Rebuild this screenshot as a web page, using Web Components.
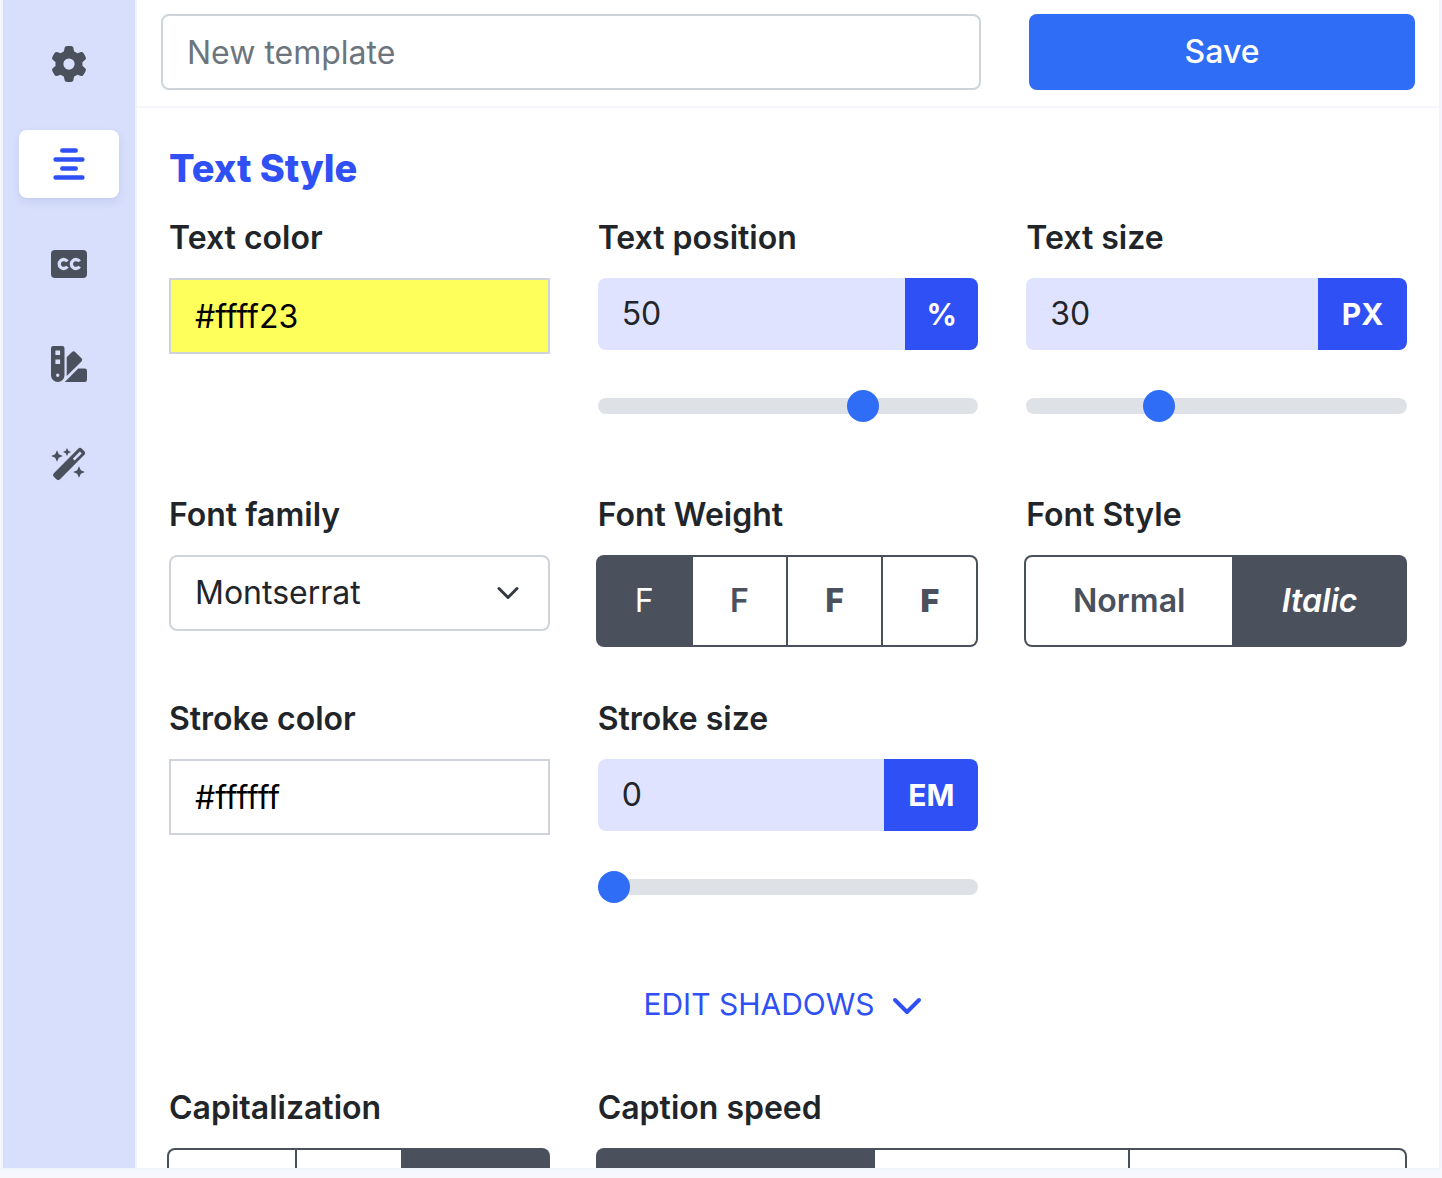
<!DOCTYPE html>
<html lang="en">
<head>
<meta charset="utf-8">
<title>Template editor</title>
<style>
  :root {
    --blue: #2e50f5;
    --primary: #306df6;
    --ink: #212529;
    --slate: #4a505c;
    --line: #ced4da;
    --frame: #f0f4fb;
  }
  body {
    margin: 0;
    background: #f6f8fd;
    color: var(--ink);
    font: 400 32px/40px Inter, "Liberation Sans", sans-serif;
  }
</style>
</head>
<body>
<template-editor></template-editor>
<script>
const base = `<style>
  *, *::before, *::after { box-sizing: border-box; }
  input, select, button { font: inherit; margin: 0; }
  label, .label { display: block; font-weight: 600; line-height: 40px; margin: 0 0 20px; }
</style>`;

class Base extends HTMLElement {
  connectedCallback() {
    if (this.shadowRoot) return;
    this.attachShadow({ mode: "open" }).innerHTML = base + this.render();
  }
  attr(name, fallback = "") { return this.getAttribute(name) ?? fallback; }
}

const icons = {
  gear: `<path transform="scale(.0703125)" d="M495.9 166.6c3.2 8.7 .5 18.4-6.4 24.6l-43.3 39.4c1.1 8.3 1.7 16.8 1.7 25.4s-.6 17.1-1.7 25.4l43.3 39.4c6.9 6.2 9.6 15.9 6.4 24.6c-4.4 11.9-9.7 23.3-15.8 34.3l-4.7 8.1c-6.6 11-14 21.4-22.1 31.2c-5.9 7.2-15.7 9.6-24.5 6.8l-55.7-17.7c-13.4 10.3-28.2 18.9-44 25.4l-12.5 57.1c-2 9.1-9 16.3-18.2 17.8c-13.8 2.3-28 3.5-42.5 3.5s-28.7-1.2-42.5-3.5c-9.2-1.5-16.2-8.7-18.2-17.8l-12.5-57.1c-15.8-6.5-30.6-15.1-44-25.4L83.1 425.9c-8.8 2.8-18.6 .3-24.5-6.8c-8.1-9.8-15.5-20.2-22.1-31.2l-4.7-8.1c-6.1-11-11.4-22.4-15.8-34.3c-3.2-8.7-.5-18.4 6.4-24.6l43.3-39.4C64.6 273.1 64 264.6 64 256s.6-17.1 1.7-25.4L22.4 191.2c-6.9-6.2-9.6-15.9-6.4-24.6c4.4-11.9 9.7-23.3 15.8-34.3l4.7-8.1c6.6-11 14-21.4 22.1-31.2c5.9-7.2 15.7-9.6 24.5-6.8l55.7 17.7c13.4-10.3 28.2-18.9 44-25.4l12.5-57.1c2-9.1 9-16.3 18.2-17.8C227.3 1.2 241.5 0 256 0s28.7 1.2 42.5 3.5c9.2 1.5 16.2 8.7 18.2 17.8l12.5 57.1c15.8 6.5 30.6 15.1 44 25.4l55.7-17.7c8.8-2.8 18.6-.3 24.5 6.8c8.1 9.8 15.5 20.2 22.1 31.2l4.7 8.1c6.1 11 11.4 22.4 15.8 34.3zM256 336a80 80 0 1 0 0-160 80 80 0 1 0 0 160z"/>`,
  align: `<path fill="none" stroke="currentColor" stroke-width="4.5" stroke-linecap="round" d="M11.3 4.4h13.4M4.6 13.4h26.8M11.3 22.4h13.4M4.6 31.4h26.8"/>`,
  captions: `<rect y="4" width="36" height="28" rx="4"/><path fill="none" stroke="#d8dffc" stroke-width="3.3" d="M16.4 15.4a4.5 4.5 0 1 0 0 5.2M28.6 15.4a4.5 4.5 0 1 0 0 5.2"/>`,
  swatches: `<path fill-rule="evenodd" d="M2.2 0h9.1a2.2 2.2 0 0 1 2.2 2.2v27a6.75 6.75 0 0 1-13.5 0v-27A2.2 2.2 0 0 1 2.2 0zM4.4 4.4V9h4.7V4.4zM4.4 13.4V18h4.7v-4.6zM6.75 27.6a1.7 1.7 0 1 0 0 3.4 1.7 1.7 0 0 0 0-3.4z"/><path d="M15.7 30V11.2L21 5.9a2.2 2.2 0 0 1 3.1 0l6.4 6.4a2.2 2.2 0 0 1 0 3.1zM13.8 36l13.4-13.5h6.6a2.2 2.2 0 0 1 2.2 2.2v9.1a2.2 2.2 0 0 1-2.2 2.2z"/>`,
  wand: `<path fill-rule="evenodd" d="M26.9 2.9a3 3 0 0 1 4.2 0l2 2a3 3 0 0 1 0 4.2L9.3 33.1a3 3 0 0 1-4.2 0l-2-2a3 3 0 0 1 0-4.2zM28.9 5.6l-7.1 7.1 1.8 1.8 7.1-7.1z"/><path d="M6 4.2 7.8 8.2 11.8 10 7.8 11.8 6 15.8 4.2 11.8.2 10 4.2 8.2zM16 2 17.3 4.7 20 6 17.3 7.3 16 10 14.7 7.3 12 6 14.7 4.7zM28 20.2l1.8 4 4 1.8-4 1.8-1.8 4-1.8-4-4-1.8 4-1.8z"/>`
};

customElements.define("side-tab", class extends Base {
  render() {
    return `<style>
      :host { display: block; }
      button { display: grid; place-items: center; width: 100%; height: 68px; padding: 0; border: 0; border-radius: 8px; background: none; color: var(--slate); }
      :host([selected]) button { background: #fff; color: var(--blue); box-shadow: 0 4px 8px rgb(60 80 160 / .12); }
      svg { width: 36px; height: 36px; fill: currentColor; }
    </style>
    <button type="button" aria-label="${this.attr("name")}"><svg viewBox="0 0 36 36" aria-hidden="true">${icons[this.attr("icon")]}</svg></button>`;
  }
});

customElements.define("side-bar", class extends Base {
  render() {
    return `<style>
      :host { display: block; flex: none; width: 134px; box-sizing: border-box; background: #d8dffc; border-right: 2px solid var(--frame); }
      nav { display: flex; flex-direction: column; gap: 32px; padding: 30px 16px; }
    </style><nav aria-label="Sections"><slot></slot></nav>`;
  }
});

customElements.define("template-header", class extends Base {
  render() {
    return `<style>
      :host { display: block; border-bottom: 2px solid #f4f6fc; }
      form { display: grid; grid-template-columns: repeat(3, minmax(0, 1fr)); column-gap: 48px; padding: 14px 24px 16px; }
      input { grid-column: span 2; width: 100%; height: 76px; padding: 0 24px; border: 2px solid var(--line); border-radius: 8px; background: #fff; color: var(--ink); }
      input::placeholder { color: #6c757d; opacity: 1; }
      button { height: 76px; padding: 0; border: 0; border-radius: 8px; background: var(--primary); color: #fff; font-weight: 500; }
    </style>
    <form><input type="text" aria-label="Template name" placeholder="New template"><button type="button">Save</button></form>`;
  }
});

customElements.define("color-field", class extends Base {
  render() {
    return `<style>
      :host { display: block; }
      input { display: block; width: 100%; height: 76px; padding: 0 24px; border: 2px solid var(--line); border-radius: 0; background: ${this.attr("swatch", "#fff")}; color: #000; }
    </style>
    <label for="c">${this.attr("label")}</label><input id="c" type="text" value="${this.attr("value")}">`;
  }
});

customElements.define("measure-field", class extends Base {
  render() {
    return `<style>
      :host { display: block; }
      .group { display: flex; height: 72px; border-radius: 8px; overflow: hidden; }
      .group input { flex: 1; min-width: 0; padding: 0 24px; border: 0; background: #dfe3ff; color: var(--ink); }
      .unit { display: grid; place-items: center; width: var(--unit, 90px); background: var(--blue); color: #fff; font-size: 30px; font-weight: 700; }
      input[type=range] { display: block; appearance: none; width: 100%; height: 32px; margin: 40px 0 21px; background: none; }
      input[type=range]::-webkit-slider-runnable-track { height: 16px; border-radius: 8px; background: #dee2e6; }
      input[type=range]::-webkit-slider-thumb { appearance: none; width: 32px; height: 32px; margin-top: -8px; border-radius: 50%; background: var(--primary); }
    </style>
    <label for="n">${this.attr("label")}</label>
    <div class="group"><input id="n" type="text" inputmode="decimal" value="${this.attr("value")}"><span class="unit">${this.attr("unit")}</span></div>
    <input type="range" aria-label="${this.attr("label")}" min="0" max="1000" value="${this.attr("level")}">`;
  }
});

customElements.define("select-field", class extends Base {
  render() {
    return `<style>
      :host { display: block; }
      .box { display: grid; align-items: center; }
      select, svg { grid-area: 1 / 1; }
      select { appearance: none; width: 100%; height: 76px; padding: 0 64px 0 24px; border: 2px solid var(--line); border-radius: 8px; background: #fff; color: var(--ink); }
      svg { justify-self: end; width: 24px; height: 24px; margin-right: 30px; pointer-events: none; fill: none; stroke: #343a40; stroke-width: 3; stroke-linecap: round; stroke-linejoin: round; }
    </style>
    <label for="s">${this.attr("label")}</label>
    <div class="box"><select id="s"><option>${this.attr("value")}</option></select><svg viewBox="0 0 24 24" aria-hidden="true"><path d="m3 7.5 9 9 9-9"/></svg></div>`;
  }
});

customElements.define("button-choice", class extends Base {
  render() {
    return `<style>
      :host { display: block; flex: var(--share, 1) 1 0; min-width: 0; }
      button { display: block; width: 100%; height: 88px; padding: 0; border: 0; background: #fff; color: var(--slate); font-weight: inherit; font-style: inherit; }
      :host(:first-child) button { border-radius: 6px 0 0 6px; }
      :host(:last-child) button { border-radius: 0 6px 6px 0; }
      :host([pressed]) button { background: var(--slate); color: #fff; }
    </style>
    <button type="button" aria-pressed="${this.hasAttribute("pressed")}" ${this.attr("name") ? `aria-label="${this.attr("name")}"` : ""}><slot></slot></button>`;
  }
});

customElements.define("choice-group", class extends Base {
  render() {
    return `<style>
      :host { display: block; }
      .group { display: flex; gap: 2px; margin-left: -2px; padding: 2px; background: var(--slate); border-radius: 8px; }
    </style>
    <div class="label" id="l">${this.attr("label")}</div>
    <div class="group" role="group" aria-labelledby="l"><slot></slot></div>`;
  }
});

customElements.define("disclosure-button", class extends Base {
  render() {
    return `<style>
      :host { display: flex; justify-content: center; }
      button { display: flex; align-items: center; gap: 16px; height: 60px; padding: 0 10px 4px 0; border: 0; background: none; color: var(--blue); font-size: 30px; }
      svg { width: 32px; height: 32px; fill: none; stroke: currentColor; stroke-width: 4; stroke-linecap: round; stroke-linejoin: round; }
    </style>
    <button type="button" aria-expanded="false"><slot></slot><svg viewBox="0 0 32 32" aria-hidden="true"><path d="m4 12 12 12 12-12"/></svg></button>`;
  }
});

customElements.define("style-panel", class extends Base {
  render() {
    return `<style>
      :host { display: block; padding: 36px 32px 52px; }
      h2 { margin: 0 0 26px; color: var(--blue); font-size: 38px; line-height: 48px; font-weight: 800; }
      .grid { display: grid; grid-template-columns: repeat(3, minmax(0, 1fr)); gap: 52px 48px; }
    </style><h2>${this.attr("heading")}</h2><div class="grid"><slot></slot></div>`;
  }
});

customElements.define("template-editor", class extends Base {
  render() {
    return `<style>
      :host { display: block; box-sizing: border-box; height: 100vh; padding: 0 1px 8px; }
      .frame { display: flex; height: 100%; border: solid var(--frame); border-width: 0 2px 2px; background: #fff; overflow: hidden; }
      main { flex: 1; min-width: 0; }
      .all { grid-column: 1 / -1; }
      .wide { grid-column: span 2; }
    </style>
    <div class="frame">
      <side-bar>
        <side-tab icon="gear" name="Settings"></side-tab>
        <side-tab icon="align" name="Text style" selected></side-tab>
        <side-tab icon="captions" name="Captions"></side-tab>
        <side-tab icon="swatches" name="Colors"></side-tab>
        <side-tab icon="wand" name="Effects"></side-tab>
      </side-bar>
      <main>
        <template-header></template-header>
        <style-panel heading="Text Style">
          <color-field label="Text color" value="#ffff23" swatch="#ffff5b"></color-field>
          <measure-field label="Text position" value="50" unit="%" level="715" style="--unit: 73px"></measure-field>
          <measure-field label="Text size" value="30" unit="PX" level="335" style="--unit: 89px"></measure-field>
          <select-field label="Font family" value="Montserrat"></select-field>
          <choice-group label="Font Weight">
            <button-choice pressed style="font-weight: 400">F</button-choice>
            <button-choice style="font-weight: 600">F</button-choice>
            <button-choice style="font-weight: 800">F</button-choice>
            <button-choice style="font-weight: 900">F</button-choice>
          </choice-group>
          <choice-group label="Font Style">
            <button-choice style="--share: 206; font-weight: 600">Normal</button-choice>
            <button-choice pressed style="--share: 171; font-weight: 600; font-style: italic">Italic</button-choice>
          </choice-group>
          <color-field label="Stroke color" value="#ffffff"></color-field>
          <measure-field label="Stroke size" value="0" unit="EM" level="0" style="--unit: 94px"></measure-field>
          <disclosure-button class="all">EDIT SHADOWS</disclosure-button>
          <choice-group label="Capitalization">
            <button-choice name="Sentence case" style="--share: 126"></button-choice>
            <button-choice name="Lowercase" style="--share: 104"></button-choice>
            <button-choice name="Uppercase" pressed style="--share: 145"></button-choice>
          </choice-group>
          <choice-group class="wide" label="Caption speed">
            <button-choice name="Slow" pressed style="--share: 275"></button-choice>
            <button-choice name="Normal" style="--share: 253"></button-choice>
            <button-choice name="Fast" style="--share: 275"></button-choice>
          </choice-group>
        </style-panel>
      </main>
    </div>`;
  }
});
</script>
</body>
</html>
